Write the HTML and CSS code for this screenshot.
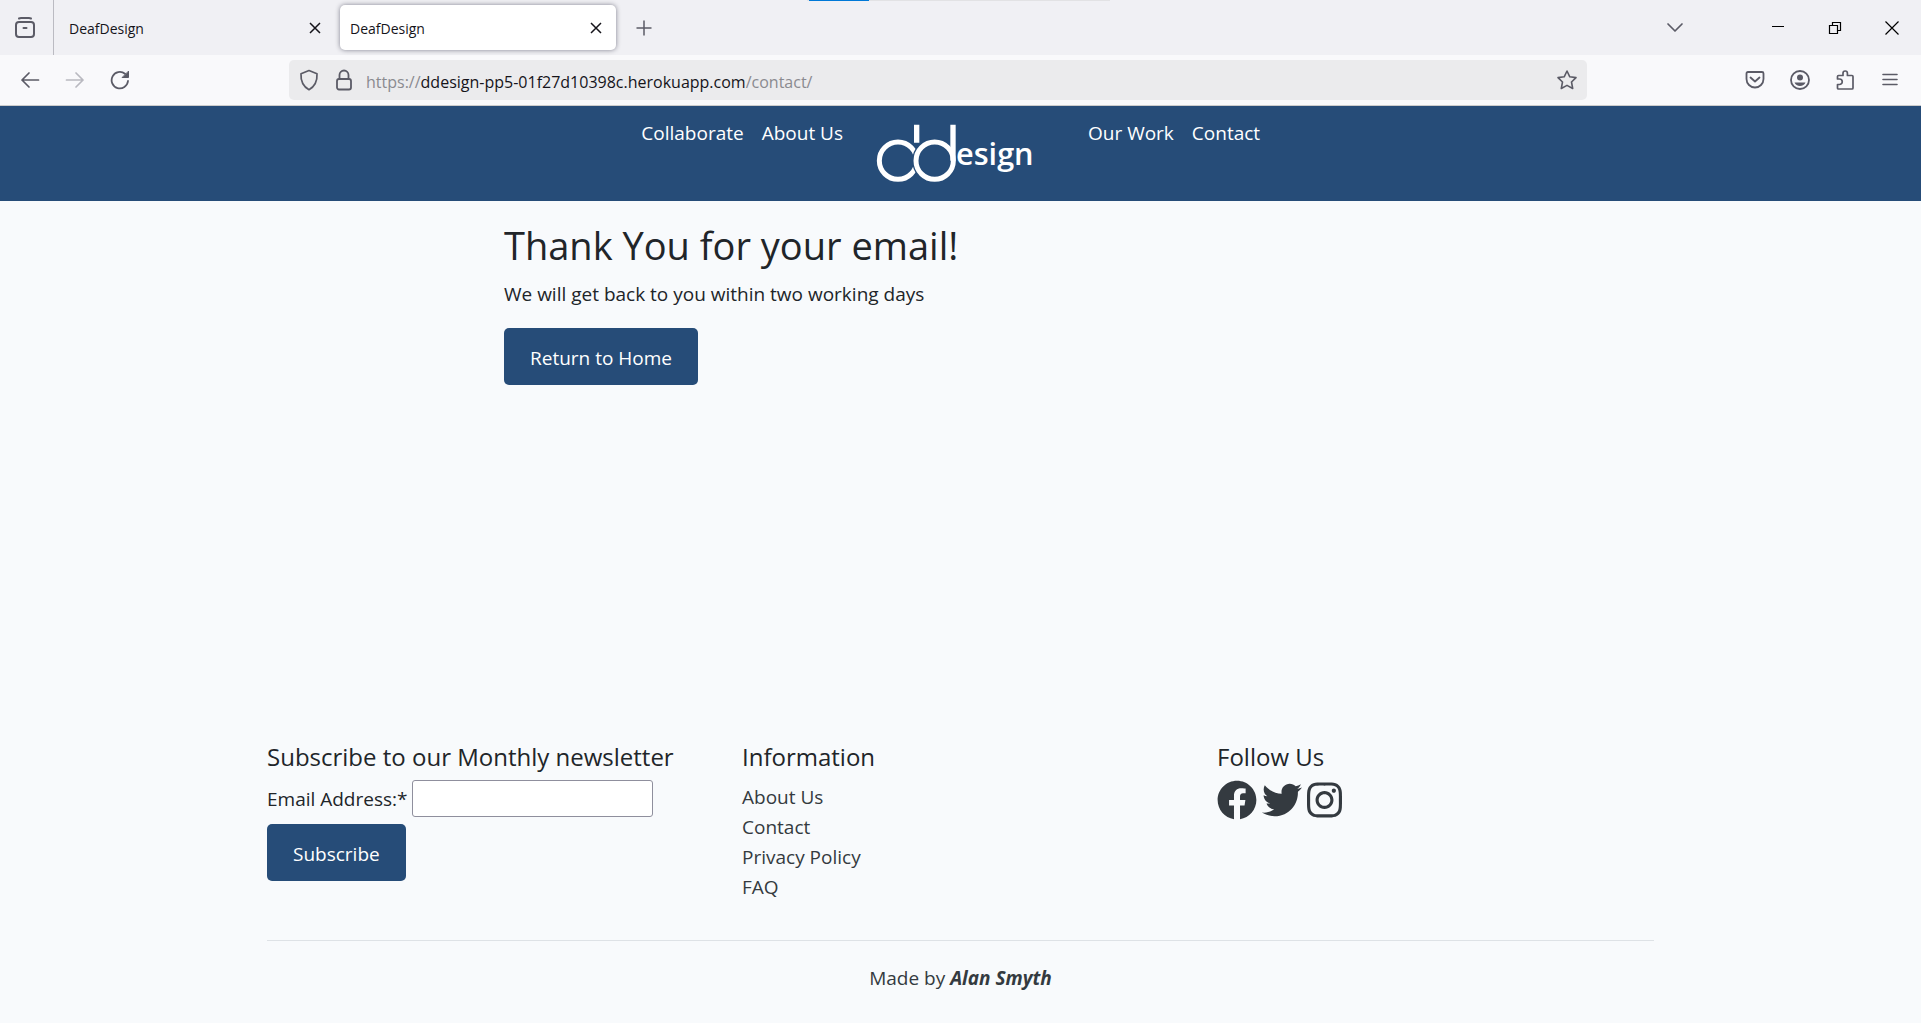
FILE: index.html
```html
<!DOCTYPE html>
<html lang="en">
<head>
<meta charset="utf-8">
<meta name="viewport" content="width=device-width, initial-scale=1">
<title>DeafDesign</title>
<link rel="stylesheet" href="styles.css">
</head>
<body>
<div class="browser">
  <div class="load-track"><div class="load-bar"></div></div>
  <div class="tab-strip">
    <button class="icon-btn recent" aria-label="Recent tabs">
      <svg width="20" height="22" viewBox="0 0 20 22" fill="none" stroke="currentColor" stroke-width="2" stroke-linecap="round"><path d="M4 1.5q1-.5 2-.5h8q1 0 2 .5"/><rect x="1" y="5" width="18" height="15" rx="3"/><path d="M8.500 11h3"/></svg>
    </button>
    <div class="tab">
      <span>DeafDesign</span>
      <button class="icon-btn" aria-label="Close tab"><svg width="12" height="12" viewBox="0 0 12 12" fill="none" stroke="#15141a" stroke-width="1.500"><path d="M1 1l10 10M11 1L1 11"/></svg></button>
    </div>
    <div class="tab active">
      <span>DeafDesign</span>
      <button class="icon-btn" aria-label="Close tab"><svg width="12" height="12" viewBox="0 0 12 12" fill="none" stroke="#15141a" stroke-width="1.500"><path d="M1 1l10 10M11 1L1 11"/></svg></button>
    </div>
    <button class="icon-btn new-tab" aria-label="New tab"><svg width="16" height="16" viewBox="0 0 16 16" fill="none" stroke="currentColor" stroke-width="1.500"><path d="M8 .5v15M.5 8h15"/></svg></button>
    <div class="window-controls">
      <button class="icon-btn list-tabs" aria-label="List all tabs"><svg width="18" height="12" viewBox="0 0 18 12" fill="none" stroke="currentColor" stroke-width="1.700" stroke-linecap="round" stroke-linejoin="round"><path d="M2 2l7 7 7-7"/></svg></button>
      <button class="icon-btn" aria-label="Minimize"><svg width="14" height="14" viewBox="0 0 14 14" stroke="#000"><path d="M1 5.500h12"/></svg></button>
      <button class="icon-btn" aria-label="Restore"><svg width="14" height="14" viewBox="0 0 14 14" fill="none" stroke="#000" stroke-width="1.200"><path d="M1.500 4.500h8v8h-8zM4.500 4.500v-3h8v8h-3"/></svg></button>
      <button class="icon-btn" aria-label="Close"><svg width="14" height="14" viewBox="0 0 14 14" fill="none" stroke="#000" stroke-width="1.200"><path d="M.5.500l13 13M13.500.500l-13 13"/></svg></button>
    </div>
  </div>
  <div class="toolbar">
    <div class="history">
      <button class="icon-btn" aria-label="Back"><svg width="20" height="20" viewBox="0 0 20 20" fill="none" stroke="currentColor" stroke-width="1.700" stroke-linecap="round" stroke-linejoin="round"><path d="M18.500 10H2M9 3l-7 7 7 7"/></svg></button>
      <button class="icon-btn" aria-label="Forward" disabled><svg width="20" height="20" viewBox="0 0 20 20" fill="none" stroke="currentColor" stroke-width="1.700" stroke-linecap="round" stroke-linejoin="round"><path d="M1.500 10H18M11 3l7 7-7 7"/></svg></button>
      <button class="icon-btn" aria-label="Reload"><svg width="20" height="20" viewBox="0 0 20 20" fill="none" stroke="currentColor" stroke-width="1.800" stroke-linecap="round"><path d="M18 11a8.200 8.200 0 1 1-3-7.200"/><path d="M18.500 1.500v6h-6z" fill="currentColor" stroke-width="1" stroke-linejoin="round"/></svg></button>
    </div>
    <div class="address">
      <svg width="20" height="22" viewBox="0 0 20 22" fill="none" stroke="currentColor" stroke-width="1.700" stroke-linejoin="round"><path d="M10 1.500l8 3.200c.4 6.800-1.500 12.300-8 16C3.500 17 1.600 11.500 2 4.700z"/></svg>
      <svg class="lock" width="16" height="22" viewBox="0 0 16 22" fill="none" stroke="currentColor" stroke-width="1.800"><rect x="1" y="10" width="14" height="10.500" rx="2"/><path d="M3.500 10V6a4.500 4.500 0 0 1 9 0v4"/></svg>
      <div class="url" role="textbox" aria-label="Address" contenteditable="true" spellcheck="false">https://<span>ddesign-pp5-01f27d10398c.herokuapp.com</span>/contact/</div>
      <button class="icon-btn" aria-label="Bookmark this page"><svg width="22" height="22" viewBox="0 0 22 22" fill="none" stroke="currentColor" stroke-width="1.600" stroke-linejoin="round"><path d="M11 2l2.800 5.800 6.200.8-4.500 4.400 1.200 6.500L11 16.400l-5.700 3.100L6.500 13 2 8.600l6.200-.8z"/></svg></button>
    </div>
    <div class="tools">
      <button class="icon-btn" aria-label="Save to Pocket"><svg width="20" height="20" viewBox="0 0 20 20" fill="none" stroke="currentColor" stroke-width="1.800" stroke-linecap="round" stroke-linejoin="round"><path d="M3 2h14q1.500 0 1.500 1.500V9A8.500 8.500 0 0 1 1.500 9V3.500Q1.500 2 3 2z"/><path d="M5.500 7.500L10 11.500l4.500-4"/></svg></button>
      <button class="icon-btn" aria-label="Account"><svg width="20" height="20" viewBox="0 0 20 20"><circle cx="10" cy="10" r="9" fill="none" stroke="currentColor" stroke-width="1.800"/><circle cx="10" cy="7.500" r="3" fill="currentColor"/><path d="M4.500 12.500h11c-.8 2.300-3 3.500-5.500 3.500s-4.700-1.200-5.500-3.500z" fill="currentColor"/></svg></button>
      <button class="icon-btn" aria-label="Extensions"><svg width="20" height="20" viewBox="0 0 20 20" fill="none" stroke="currentColor" stroke-width="1.700" stroke-linejoin="round"><path d="M2.500 9V6.500q0-1 1-1H8V3.200a2.200 2.200 0 0 1 4.400 0v2.300H17q1 0 1 1V18q0 1-1 1H3.500q-1 0-1-1v-3.500h2a2.700 2.700 0 0 0 0-5.500z"/></svg></button>
      <button class="icon-btn" aria-label="Menu"><svg width="20" height="20" viewBox="0 0 20 20" stroke="currentColor" stroke-width="1.600" stroke-linecap="round"><path d="M3 4.500h14M3 9.500h14M3 14.500h14"/></svg></button>
    </div>
  </div>
</div>

<nav class="site-nav" aria-label="Main">
  <div class="nav-group nav-left"><a href="#">Collaborate</a><a href="#">About Us</a></div>
  <a class="logo" href="#" aria-label="DDesign home">
    <svg width="160" height="64" viewBox="48 36 480 192" fill="none" stroke="#fff">
      <circle cx="114" cy="152" r="56" stroke-width="15"/>
      <circle cx="224" cy="152" r="56" stroke="#264c78" stroke-width="23"/>
      <circle cx="224" cy="152" r="56" stroke-width="15"/>
      <path d="M170 44v54M279 44v108" stroke-width="16"/>
      <text class="logo-text" x="288" y="166">esign</text>
    </svg>
  </a>
  <div class="nav-group"><a href="#">Our Work</a><a href="#">Contact</a></div>
</nav>

<main class="container message">
  <h1>Thank You for your email!</h1>
  <p>We will get back to you within two working days</p>
  <a class="btn" href="#">Return to Home</a>
</main>

<footer class="container">
  <div class="footer-columns">
    <section>
      <h2>Subscribe to our Monthly newsletter</h2>
      <form class="newsletter">
        <div class="field"><label for="email">Email Address:*</label><input id="email" type="email" required></div>
        <button class="btn" type="button">Subscribe</button>
      </form>
    </section>
    <section>
      <h2>Information</h2>
      <ul class="links">
        <li><a href="#">About Us</a></li>
        <li><a href="#">Contact</a></li>
        <li><a href="#">Privacy Policy</a></li>
        <li><a href="#">FAQ</a></li>
      </ul>
    </section>
    <section>
      <h2>Follow Us</h2>
      <div class="social">
        <a href="#" aria-label="Facebook"><svg width="40" height="40" viewBox="0 0 512 512"><path d="M504 256C504 119 393 8 256 8S8 119 8 256c0 123.780 90.690 226.380 209.250 245V327.690h-63V256h63v-54.640c0-62.150 37-96.480 93.670-96.480 27.140 0 55.520 4.840 55.520 4.840v61h-31.280c-30.800 0-40.410 19.120-40.410 38.730V256h68.780l-11 71.690h-57.780V501C413.310 482.380 504 379.780 504 256z"/></svg></a>
        <a href="#" aria-label="Twitter"><svg width="40" height="40" viewBox="0 0 512 512"><path d="M459.370 151.716c.325 4.548.325 9.097.325 13.645 0 138.720-105.583 298.558-298.558 298.558-59.452 0-114.680-17.219-161.137-47.106 8.447.974 16.568 1.299 25.340 1.299 49.055 0 94.213-16.568 130.274-44.832-46.132-.975-84.792-31.188-98.112-72.772 6.498.974 12.995 1.624 19.818 1.624 9.421 0 18.843-1.300 27.614-3.573-48.081-9.747-84.143-51.980-84.143-102.985v-1.299c13.969 7.797 30.214 12.670 47.431 13.319-28.264-18.843-46.781-51.005-46.781-87.391 0-19.492 5.197-37.360 14.294-52.954 51.655 63.675 129.300 105.258 216.365 109.807-1.624-7.797-2.599-15.918-2.599-24.040 0-57.828 46.782-104.934 104.934-104.934 30.213 0 57.502 12.670 76.670 33.137 23.715-4.548 46.456-13.320 66.599-25.340-7.798 24.366-24.366 44.833-46.132 57.827 21.117-2.273 41.584-8.122 60.426-16.243-14.292 20.791-32.161 39.308-52.628 54.253z"/></svg></a>
        <a href="#" aria-label="Instagram"><svg width="35" height="40" viewBox="0 0 448 512"><path d="M224.100 141c-63.600 0-114.900 51.300-114.900 114.900s51.300 114.900 114.900 114.900S339 319.500 339 255.900 287.700 141 224.100 141zm0 189.600c-41.100 0-74.700-33.500-74.700-74.700s33.500-74.700 74.700-74.700 74.700 33.500 74.700 74.700-33.600 74.700-74.700 74.700zm146.400-194.300c0 14.900-12 26.800-26.800 26.800-14.900 0-26.800-12-26.800-26.800s12-26.800 26.800-26.800 26.800 12 26.800 26.800zm76.100 27.200c-1.700-35.900-9.900-67.700-36.200-93.900-26.200-26.200-58-34.400-93.900-36.200-37-2.100-147.900-2.100-184.900 0-35.800 1.700-67.600 9.900-93.900 36.100s-34.400 58-36.200 93.900c-2.100 37-2.100 147.900 0 184.900 1.700 35.900 9.900 67.700 36.200 93.900s58 34.400 93.900 36.200c37 2.100 147.900 2.100 184.900 0 35.900-1.700 67.700-9.900 93.900-36.200 26.200-26.200 34.400-58 36.200-93.900 2.100-37 2.100-147.800 0-184.800zM398.800 388c-7.800 19.600-22.900 34.700-42.600 42.600-29.500 11.700-99.500 9-132.100 9s-102.700 2.600-132.100-9c-19.600-7.800-34.700-22.900-42.600-42.600-11.700-29.500-9-99.500-9-132.100s-2.600-102.700 9-132.100c7.800-19.600 22.900-34.700 42.600-42.600 29.500-11.700 99.500-9 132.100-9s102.700-2.600 132.100 9c19.600 7.800 34.700 22.900 42.600 42.600 11.700 29.500 9 99.500 9 132.100s2.700 102.700-9 132.100z"/></svg></a>
      </div>
    </section>
  </div>
  <p class="credit">Made by <strong>Alan Smyth</strong></p>
</footer>
</body>
</html>
```
FILE: styles.css
```css
* { box-sizing: border-box; }

body {
  margin: 0;
  background: #f8fafc;
  color: #212529;
  font-family: "Open Sans", "Noto Sans", sans-serif;
  font-size: 19px;
  line-height: 30px;
}

h1, h2, p, ul { margin: 0; font-weight: 400; }
a { color: inherit; text-decoration: none; }
svg { display: block; }
button, input { font: inherit; color: inherit; }

/* Browser window */
.browser {
  position: relative;
  border-bottom: 1px solid #ccc;
  color: #5b5b66;
}
.load-track {
  position: absolute;
  top: 0;
  left: 42%;
  width: 303px;
  height: 1px;
  padding-left: 2px;
  background: #e2e2e4;
}
.load-bar { width: 60px; height: 1px; background: #0078d7; }
.icon-btn {
  flex: none;
  padding: 0;
  border: 0;
  background: none;
}
.icon-btn:disabled { color: #b9b9c0; }
.tab-strip {
  display: flex;
  align-items: center;
  height: 55px;
  background: #f0f0f4;
}
.recent {
  display: flex;
  align-items: center;
  justify-content: center;
  width: 54px;
  height: 55px;
  padding-right: 4px;
  border-right: 1px solid #bbbbc2;
}
.tab {
  display: flex;
  align-items: center;
  justify-content: space-between;
  width: 276px;
  height: 45px;
  padding: 0 14px 0 10px;
  margin-left: 5px;
  border-radius: 5px;
  color: #15141a;
  font-size: 14px;
}
.tab span { padding-top: 2px; }
.active { background: #fff; box-shadow: 0 0 5px #80808e; }
.new-tab { margin-left: 20px; }
.window-controls {
  display: flex;
  align-items: center;
  gap: 43px;
  margin-left: auto;
  padding-right: 22px;
}
.list-tabs { margin-right: 44px; }
.toolbar {
  display: flex;
  align-items: center;
  height: 50px;
  background: #f9f9fb;
}
.history {
  display: flex;
  gap: 25px;
  width: 289px;
  padding-left: 20px;
}
.address {
  display: flex;
  flex: 1;
  align-items: center;
  height: 40px;
  padding: 0 9px 0 10px;
  border-radius: 5px;
  background: #ebebed;
}
.lock { margin: 0 14px 0 17px; }
.url {
  flex: 1;
  padding-top: 3px;
  color: #8a8a90;
  font-size: 16px;
}
.url span { color: #15141a; }
.tools {
  display: flex;
  gap: 25px;
  padding: 0 21px 0 158px;
}

/* Site navigation */
.site-nav {
  display: grid;
  grid-template-columns: 1fr 245px 1fr;
  padding: 12px 0 15px 10px;
  background: #264c78;
  color: #fff;
}
.nav-group { display: flex; gap: 18px; }
.nav-left { justify-content: flex-end; }
.logo { padding: 4px 0 0 33px; }
.logo-text {
  fill: #fff;
  stroke: none;
  font-size: 92px;
  font-weight: 600;
}

/* Page content */
.container {
  width: 100%;
  max-width: 1425px;
  margin: 0 auto;
  padding: 0 19px;
}
.message {
  min-height: 541px;
  padding: 19px 19px 0 256px;
}
h1 { font-size: 38px; line-height: 50px; }
h1 + p { margin: 9px 0 19px; }
.btn {
  display: inline-block;
  padding: 15px 26px 12px;
  border: 0;
  border-radius: 5px;
  background: #264c78;
  color: #fff;
}

/* Footer */
.footer-columns {
  display: grid;
  grid-template-columns: repeat(3, 1fr);
  column-gap: 38px;
  padding-bottom: 38px;
  border-bottom: 1px solid #dee2e6;
}
h2 { font-size: 24px; line-height: 30px; white-space: nowrap; }
.field {
  display: flex;
  align-items: center;
  gap: 4px;
  margin: 8px 0 7px;
}
.field input {
  width: 241px;
  height: 37px;
  padding: 2px 8px;
  border: 1px solid #8f8f9d;
  border-radius: 3px;
  background: #fff;
}
.links {
  margin-top: 10px;
  padding: 0;
  list-style: none;
}
.links, .credit { color: #343a40; }
.social {
  display: flex;
  gap: 5px;
  margin-top: 8px;
  fill: #343a40;
}
.credit { padding: 22px 0 28px; text-align: center; }
.credit strong { font-style: italic; }
```
